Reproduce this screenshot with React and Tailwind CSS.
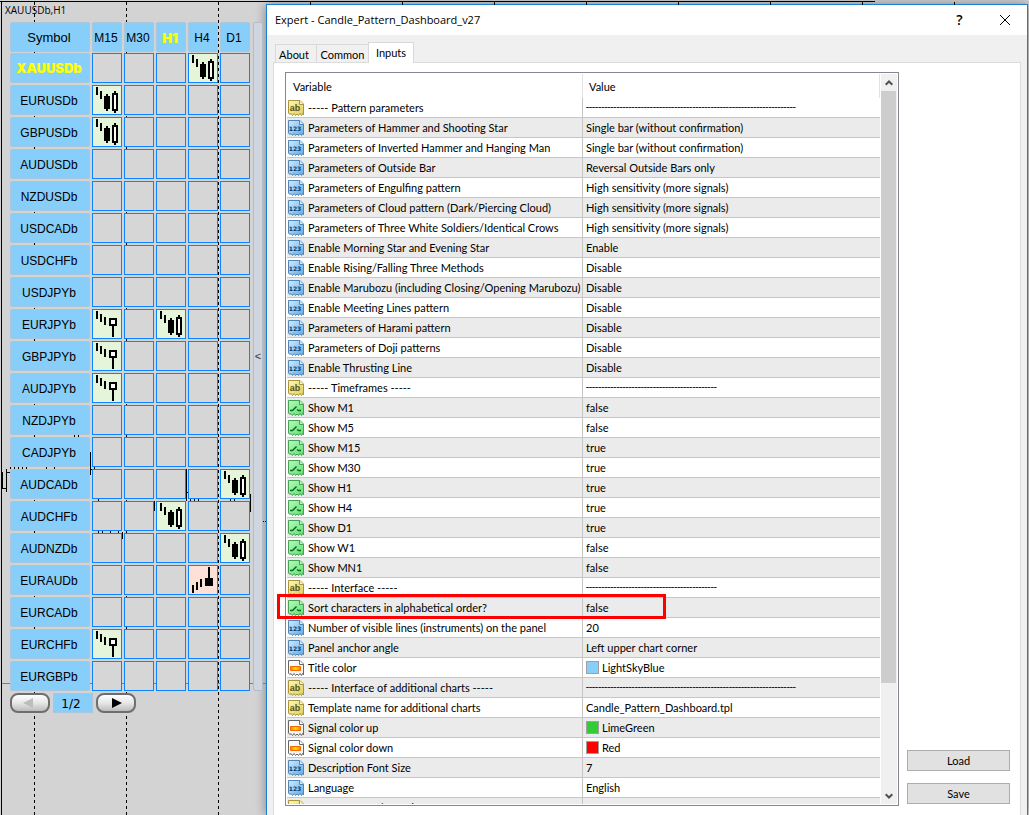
import React from "react";

const TIMEFRAMES = ["M15", "M30", "H1", "H4", "D1"];

const SYMBOLS = [
  { name: "XAUUSDb", active: true, signals: { H4: "engulf" } },
  { name: "EURUSDb", signals: { M15: "engulf" } },
  { name: "GBPUSDb", signals: { M15: "engulf" } },
  { name: "AUDUSDb", signals: {} },
  { name: "NZDUSDb", signals: {} },
  { name: "USDCADb", signals: {} },
  { name: "USDCHFb", signals: {} },
  { name: "USDJPYb", signals: {} },
  { name: "EURJPYb", signals: { M15: "hammer", H1: "engulf" } },
  { name: "GBPJPYb", signals: { M15: "hammer" } },
  { name: "AUDJPYb", signals: { M15: "hammer" } },
  { name: "NZDJPYb", signals: {} },
  { name: "CADJPYb", signals: {} },
  { name: "AUDCADb", signals: { D1: "engulf" } },
  { name: "AUDCHFb", signals: { H1: "engulf" } },
  { name: "AUDNZDb", signals: { D1: "engulf" } },
  { name: "EURAUDb", signals: { H4: "star" } },
  { name: "EURCADb", signals: {} },
  { name: "EURCHFb", signals: { M15: "hammer" } },
  { name: "EURGBPb", signals: {} },
];

const SINGLE = "Single bar (without confirmation)";
const HIGH = "High sensitivity (more signals)";
const DASH_LONG = "-".repeat(69);
const DASH_SHORT = "-".repeat(43);

const INPUTS = [
  ["text", "----- Pattern parameters", DASH_LONG],
  ["num", "Parameters of Hammer and Shooting Star", SINGLE],
  ["num", "Parameters of Inverted Hammer and Hanging Man", SINGLE],
  ["num", "Parameters of Outside Bar", "Reversal Outside Bars only"],
  ["num", "Parameters of Engulfing pattern", HIGH],
  ["num", "Parameters of Cloud pattern (Dark/Piercing Cloud)", HIGH],
  ["num", "Parameters of Three White Soldiers/Identical Crows", HIGH],
  ["num", "Enable Morning Star and Evening Star", "Enable"],
  ["num", "Enable Rising/Falling Three Methods", "Disable"],
  ["num", "Enable Marubozu (including Closing/Opening Marubozu)", "Disable"],
  ["num", "Enable Meeting Lines pattern", "Disable"],
  ["num", "Parameters of Harami pattern", "Disable"],
  ["num", "Parameters of Doji patterns", "Disable"],
  ["num", "Enable Thrusting Line", "Disable"],
  ["text", "----- Timeframes -----", DASH_SHORT],
  ["bool", "Show M1", "false"],
  ["bool", "Show M5", "false"],
  ["bool", "Show M15", "true"],
  ["bool", "Show M30", "true"],
  ["bool", "Show H1", "true"],
  ["bool", "Show H4", "true"],
  ["bool", "Show D1", "true"],
  ["bool", "Show W1", "false"],
  ["bool", "Show MN1", "false"],
  ["text", "----- Interface -----", DASH_SHORT],
  ["bool", "Sort characters in alphabetical order?", "false"],
  ["num", "Number of visible lines (instruments) on the panel", "20"],
  ["num", "Panel anchor angle", "Left upper chart corner"],
  ["color", "Title color", "LightSkyBlue", "bg-[#87cefa]"],
  ["text", "----- Interface of additional charts -----", DASH_LONG],
  ["text", "Template name for additional charts", "Candle_Pattern_Dashboard.tpl"],
  ["color", "Signal color up", "LimeGreen", "bg-[#32cd32]"],
  ["color", "Signal color down", "Red", "bg-[#ff0000]"],
  ["num", "Description Font Size", "7"],
  ["num", "Language", "English"],
  ["text", "----- Messages/Sound -----", ""],
];

function SignalIcon({ kind }) {
  if (kind === "engulf") {
    return (
      <svg viewBox="0 0 28 28" className="size-7" shapeRendering="crispEdges" aria-label="Engulfing">
        <path d="M3 1h2v8H3zM7 5h2v8H7zM13 8h2v2h2v13h-2v2h-2v-2h-2V10h2z" fill="#000" />
        <path d="M21 5h2v2h2v18h-2v2h-2v-2h-2V7h2z" fill="#000" />
        <path d="M21 9h2v14h-2z" fill="#fff" />
      </svg>
    );
  }
  if (kind === "hammer") {
    return (
      <svg viewBox="0 0 28 28" className="size-7" shapeRendering="crispEdges" aria-label="Hammer">
        <path d="M3 1h2v8H3zM7 4h2v8H7zM11 7h2v8h-2zM16 8h8v8h-3v11h-2V16h-3z" fill="#000" />
        <path d="M18 10h4v4h-4z" fill="#fff" />
      </svg>
    );
  }
  return (
    <svg viewBox="0 0 28 28" className="size-7" shapeRendering="crispEdges" aria-label="Shooting star">
      <path d="M3 19h2v8H3zM7 16h2v8H7zM11 13h2v8h-2zM19 1h2v11h3v8h-8v-8h3z" fill="#000" />
    </svg>
  );
}

function TypeIcon({ type }) {
  const sheet = "M0.5 0.5H12L15.5 4V15L14.5 13.5L13.5 15.5L12 13.5L10.5 15.5L9 14L7.5 15.5L6 13.5L4.5 15.5L3 13.5L1.8 14.5L0.5 13Z";
  const look = {
    num: ["#d3ebff", "#64a9e2", "#5087b8"],
    text: ["#fbf6bd", "#dfcf55", "#a8973d"],
    bool: ["#b9f8c0", "#5de070", "#43a350"],
    color: ["#ffffff", "#f1f1f1", "#666666"],
  }[type];
  return (
    <svg viewBox="0 0 16 16" className="size-4 shrink-0" aria-hidden="true">
      <defs>
        <linearGradient id={"sheet-" + type} x1="0" y1="0" x2="1" y2="1">
          <stop offset="0" stopColor={look[0]} />
          <stop offset="1" stopColor={look[1]} />
        </linearGradient>
        <linearGradient id="swatch-fill">
          <stop offset="0" stopColor="#ff7a00" />
          <stop offset="0.5" stopColor="#ffe000" />
          <stop offset="1" stopColor="#ff7a00" />
        </linearGradient>
      </defs>
      <path d={sheet} fill={"url(#sheet-" + type + ")"} stroke={look[2]} />
      <path d="M11.5 0.5V4.5H15.5" fill={look[0]} stroke={look[2]} />
      {type === "num" && (
        <text x="7" y="11" textAnchor="middle" fontSize="6" fontWeight="700" fontFamily="DejaVu Sans, sans-serif" fill="#0c3a66">123</text>
      )}
      {type === "text" && (
        <text x="7" y="11" textAnchor="middle" fontSize="9" fontWeight="700" fontFamily="Liberation Sans, sans-serif" fill="#5c4e0c">ab</text>
      )}
      {type === "bool" && <path d="M2 10.5H4.5L8.5 6.5M9 9.5L10.5 10.5H13" fill="none" stroke="#0d6a1c" strokeWidth="1.5" />}
      {type === "color" && <path d="M2.5 6.5h10v4h-10z" fill="url(#swatch-fill)" stroke="#f06a00" />}
    </svg>
  );
}

function ChartBackdrop() {
  return (
    <svg className="absolute inset-0 h-full w-full" shapeRendering="crispEdges" aria-hidden="true">
      <path d="M0 1.5H875M1.5 1V2000" stroke="#000" fill="none" />
      <path d="M310.5 2V5M402.5 2V5M494.5 2V5M586.5 2V5M678.5 2V5M770.5 2V5M862.5 2V5M954.5 2V5" stroke="#000" />
      <path d="M34.5 2V2000M126.5 2V2000M218.5 2V2000" stroke="#000" strokeDasharray="3 3" />
      <path d="M2 683.5H266" stroke="#708090" />
      <path
        d="M2.5 472V488M2 488.5H6M6.5 469V492M7 472.5H10M10.5 467V469M14.5 467V469M18.5 467V469M22.5 467V469M26.5 467V469M46.5 467V469M54.5 467V469M74.5 435V437M78.5 435V437M90.5 452V475M91 469.5H94M94.5 467V469M186.5 469V501M186 492.5H188M154.5 501V511M122.5 532V539M124.5 533V536M250.5 494V512M98.5 499V501M98.5 531V533M102.5 531V533M110.5 531V533M118.5 531V533M190.5 499V501M194.5 499V501M198.5 499V501M230.5 499V501M234.5 499V501M263 521.5H264M265 521.5H266"
        stroke="#000"
      />
    </svg>
  );
}

function Dashboard() {
  return (
    <section className="relative h-full w-[266px] shrink-0 overflow-hidden font-['Liberation_Sans',Arial,sans-serif] text-xs text-black">
      <h2 className="h-[22px] pl-[5px] pt-1 font-['Open_Sans',sans-serif] text-[10px] leading-3">XAUUSDb,H1</h2>
      <div className="flex gap-[3px] pl-[10px]">
        <table className="-mt-px border-separate border-spacing-0">
          <thead>
            <tr>
              <th className="p-0 pb-px pr-0.5 pt-px font-normal">
                <div className="h-[30px] w-20 rounded-xs border border-[#a9c6dc] bg-[#87cefa] pr-0.5 text-[13px] leading-[30px]">Symbol</div>
              </th>
              {TIMEFRAMES.map((tf) => (
                <th key={tf} className="p-0 pb-px pr-0.5 pt-px font-normal">
                  <div
                    className={
                      tf === "H1"
                        ? "flex h-[30px] w-[30px] justify-center rounded-xs border border-[#a9c6dc] bg-[#87cefa] pr-0.5 font-['Inter',sans-serif] text-[13px] font-black leading-[30px] text-[#ffff00]"
                        : "flex h-[30px] w-[30px] justify-center rounded-xs border border-[#a9c6dc] bg-[#87cefa] pr-0.5 leading-[30px]"
                    }
                  >
                    {tf}
                  </div>
                </th>
              ))}
            </tr>
          </thead>
          <tbody>
            {SYMBOLS.map((s) => (
              <tr key={s.name}>
                <th className="p-0 pb-0.5 pr-0.5 font-normal">
                  <button
                    type="button"
                    className={
                      s.active
                        ? "block h-[30px] w-20 rounded-xs border border-[#a9c6dc] bg-[#87cefa] pr-0.5 font-['Inter',sans-serif] text-[13px] font-black leading-7 text-[#ffff00]"
                        : "block h-[30px] w-20 rounded-xs border border-[#a9c6dc] bg-[#87cefa] pr-0.5 leading-[30px]"
                    }
                  >
                    {s.name}
                  </button>
                </th>
                {TIMEFRAMES.map((tf) => {
                  const kind = s.signals[tf];
                  const tone = !kind ? "bg-[#d6d6d6]" : kind === "star" ? "bg-[#ffe0d6]" : "bg-[#e4f5da]";
                  return (
                    <td key={tf} className="p-0 pb-0.5 pr-0.5">
                      <div className={"h-[30px] w-[30px] border border-[#0a84ff] " + tone}>{kind && <SignalIcon kind={kind} />}</div>
                    </td>
                  );
                })}
              </tr>
            ))}
          </tbody>
        </table>
        <button
          type="button"
          aria-label="Collapse panel"
          className="-ml-0.5 mb-0.5 w-[10px] rounded-xs border border-[#b4bcc6] bg-[#d0d6e0] text-[11px] text-[#333]"
        >
          &lt;
        </button>
      </div>
      <div className="flex gap-[3px] pl-[10px]">
        <PageButton label="Previous page" points="23,5 23,15 13,10" fill="#bdbdbd" />
        <span className="h-5 w-10 border border-[#a9c6dc] bg-[#87cefa] pr-1 text-center font-['DejaVu_Sans',sans-serif] text-xs leading-5">1/2</span>
        <PageButton label="Next page" points="16,5 16,15 26,10" fill="#000" />
      </div>
    </section>
  );
}

function PageButton({ label, points, fill }) {
  return (
    <button
      type="button"
      aria-label={label}
      className="h-5 w-10 rounded-lg border-2 border-[#6e6e6e] bg-linear-to-b from-white via-[#e6e6e6] to-[#bcbcbc]"
    >
      <svg viewBox="2 2 36 16" className="h-4 w-9" aria-hidden="true">
        <polygon points={points} fill={fill} />
      </svg>
    </button>
  );
}

function ScrollBar() {
  return (
    <div className="flex w-4 shrink-0 flex-col bg-[#f0f0f0]">
      <button type="button" aria-label="Scroll up" className="flex h-[17px] items-center justify-center">
        <svg viewBox="0 0 8 6" className="h-1.5 w-2"><path d="M0.7 4.8L4 1.5L7.3 4.8" fill="none" stroke="#505050" strokeWidth="2" /></svg>
      </button>
      <div className="flex-1">
        <div className="h-[85%] w-[15px] bg-[#cdcdcd]" />
      </div>
      <button type="button" aria-label="Scroll down" className="flex h-[17px] items-center justify-center">
        <svg viewBox="0 0 8 6" className="h-1.5 w-2"><path d="M0.7 1.2L4 4.5L7.3 1.2" fill="none" stroke="#505050" strokeWidth="2" /></svg>
      </button>
    </div>
  );
}

function InputsTable() {
  return (
    <div className="relative flex min-w-0 flex-1">
      <div className="flex min-w-0 flex-1 overflow-hidden border border-[#828790] p-px">
        <div className="min-w-0 flex-1 overflow-hidden pr-px">
          <table className="w-full table-fixed border-separate border-spacing-0 whitespace-nowrap text-left">
            <thead>
              <tr className="h-6">
                <th className="w-[296px] border-r border-[#e2e2e2] p-0 pl-1.5 pt-0.5 font-normal">Variable</th>
                <th className="border-r border-[#e2e2e2] p-0 pl-1.5 pt-0.5 font-normal">Value</th>
              </tr>
            </thead>
            <tbody>
              {INPUTS.map(([type, name, value, swatch], i) => (
                <tr key={name} className={i % 2 ? "bg-[#ebebeb]" : "bg-white"}>
                  <td className="h-5 border-b border-r border-[#c6c6c6] p-0 pl-px">
                    <div className="flex h-[19px] items-center gap-1">
                      <TypeIcon type={type} />
                      <span className="pt-px">{name}</span>
                    </div>
                  </td>
                  <td className="h-5 overflow-hidden border-b border-[#c6c6c6] p-0 pl-[3px]">
                    <div className="flex h-[19px] items-center gap-[3px]">
                      {swatch && <span className={"size-[13px] border border-[#a0a0a0] " + swatch} />}
                      <span className={value.startsWith("--") ? "pt-px font-['Roboto',sans-serif]" : "pt-px"}>{value}</span>
                    </div>
                  </td>
                </tr>
              ))}
            </tbody>
          </table>
        </div>
        <ScrollBar />
      </div>
      <div className="pointer-events-none absolute -left-2 top-[522px] h-[25px] w-[389px] border-3 border-[#ff0000]" />
    </div>
  );
}

function Dialog() {
  return (
    <section
      role="dialog"
      aria-label="Expert - Candle_Pattern_Dashboard_v27"
      className="mt-1 mr-px flex min-w-0 flex-1 flex-col border border-b-0 border-[#1880d8] bg-[#f0f0f0] font-['Lato','Liberation_Sans',sans-serif] text-[11px] leading-4 text-black shadow-[0_0_10px_rgba(0,0,0,0.4)]"
    >
      <header className="flex h-[30px] shrink-0 items-center bg-white pl-2">
        <h1 className="flex-1 font-['Open_Sans',sans-serif] text-[11px]">Expert - Candle_Pattern_Dashboard_v27</h1>
        <button type="button" aria-label="Help" className="w-[45px] font-['Open_Sans',sans-serif] text-sm font-semibold">?</button>
        <button type="button" aria-label="Close" className="flex w-[45px] justify-center">
          <svg viewBox="0 0 10 10" className="size-[10px]"><path d="M0 0L10 10M10 0L0 10" stroke="#000" fill="none" /></svg>
        </button>
      </header>
      <nav role="tablist" className="flex shrink-0 items-end pl-2 pt-[7px]">
        <button type="button" role="tab" className="h-[18px] w-[42px] border border-b-0 border-[#d9d9d9] pr-1 pt-0.5">About</button>
        <button type="button" role="tab" className="h-[18px] w-[51px] border-t border-[#d9d9d9] pt-0.5">Common</button>
        <button type="button" role="tab" aria-selected="true" className="relative -mb-px h-[21px] w-[46px] border border-b-0 border-[#d9d9d9] bg-white">Inputs</button>
      </nav>
      <div className="mx-1.5 flex min-h-0 flex-1 gap-2 border border-b-0 border-[#dcdcdc] bg-white pb-[9px] pl-[11px] pr-[10px] pt-[9px]">
        <InputsTable />
        <div className="flex w-[103px] shrink-0 flex-col justify-end gap-3 pb-0.5">
          <button type="button" className="h-[21px] border border-[#adadad] bg-[#e1e1e1]">Load</button>
          <button type="button" className="h-[21px] border border-[#adadad] bg-[#e1e1e1]">Save</button>
        </div>
      </div>
    </section>
  );
}

export default function App() {
  return (
    <main className="relative flex h-screen overflow-hidden bg-[#d3d3d3]">
      <ChartBackdrop />
      <Dashboard />
      <Dialog />
    </main>
  );
}
